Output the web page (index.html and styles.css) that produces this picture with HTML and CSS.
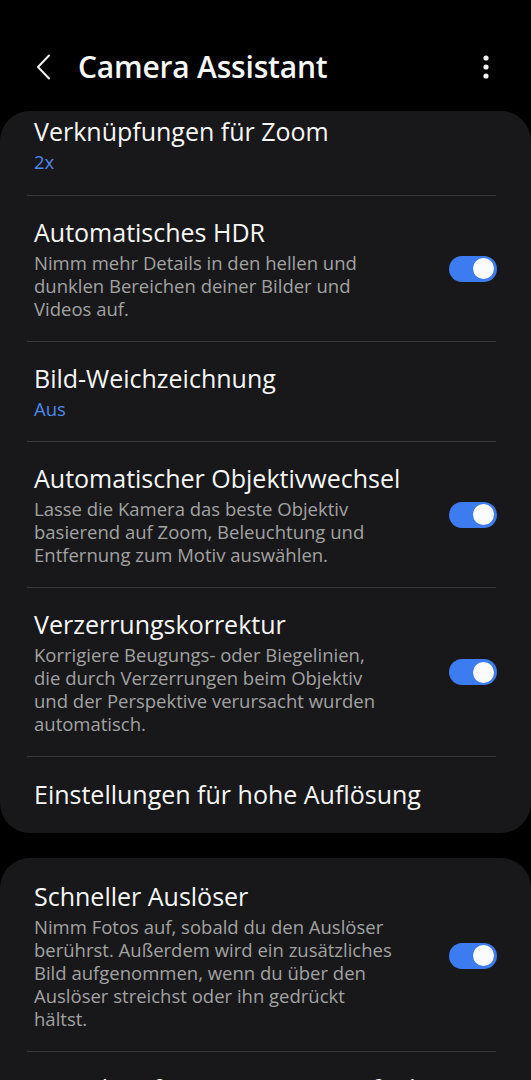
FILE: index.html
```html
<!DOCTYPE html>
<html lang="de">
<head>
  <meta charset="UTF-8" />
  <meta name="viewport" content="width=device-width, initial-scale=1.0"/>
  <title>Camera Assistant</title>
  <link rel="stylesheet" href="styles.css">
</head>
<body>
  <div class="header">
    <span class="back">
      <svg width="16" height="26" viewBox="0 0 16 26"><path d="M13 1.5 L2 13 L13 24.5" fill="none" stroke="#f2f2f2" stroke-width="2" stroke-linecap="round" stroke-linejoin="round"/></svg>
    </span>
    <h1>Camera Assistant</h1>
    <span class="more">
      <svg width="8" height="26" viewBox="0 0 8 26"><circle cx="4" cy="4" r="2.6" fill="#f2f2f2"/><circle cx="4" cy="13" r="2.6" fill="#f2f2f2"/><circle cx="4" cy="22" r="2.6" fill="#f2f2f2"/></svg>
    </span>
  </div>

  <div class="card card-first">
    <div class="row first">
      <div class="text">
        <div class="title">Verknüpfungen für Zoom</div>
        <div class="value">2x</div>
      </div>
    </div>
    <hr class="divider">
    <div class="row">
      <div class="text">
        <div class="title">Automatisches HDR</div>
        <div class="desc">Nimm mehr Details in den hellen und<br>dunklen Bereichen deiner Bilder und<br>Videos auf.</div>
      </div>
      <span class="switch on"><span class="knob"></span></span>
    </div>
    <hr class="divider">
    <div class="row">
      <div class="text">
        <div class="title">Bild-Weichzeichnung</div>
        <div class="value">Aus</div>
      </div>
    </div>
    <hr class="divider">
    <div class="row">
      <div class="text">
        <div class="title">Automatischer Objektivwechsel</div>
        <div class="desc">Lasse die Kamera das beste Objektiv<br>basierend auf Zoom, Beleuchtung und<br>Entfernung zum Motiv auswählen.</div>
      </div>
      <span class="switch on"><span class="knob"></span></span>
    </div>
    <hr class="divider">
    <div class="row">
      <div class="text">
        <div class="title">Verzerrungskorrektur</div>
        <div class="desc">Korrigiere Beugungs- oder Biegelinien,<br>die durch Verzerrungen beim Objektiv<br>und der Perspektive verursacht wurden<br>automatisch.</div>
      </div>
      <span class="switch on"><span class="knob"></span></span>
    </div>
    <hr class="divider">
    <div class="row single">
      <div class="text">
        <div class="title">Einstellungen für hohe Auflösung</div>
      </div>
    </div>
  </div>

  <div class="card">
    <div class="row top">
      <div class="text">
        <div class="title">Schneller Auslöser</div>
        <div class="desc">Nimm Fotos auf, sobald du den Auslöser<br>berührst. Außerdem wird ein zusätzliches<br>Bild aufgenommen, wenn du über den<br>Auslöser streichst oder ihn gedrückt<br>hältst.</div>
      </div>
      <span class="switch on"><span class="knob"></span></span>
    </div>
    <hr class="divider">
    <div class="row">
      <div class="text">
        <div class="title">Vorgaben für Timer-Serienaufnahmen</div>
      </div>
    </div>
  </div>
</body>
</html>
```

FILE: styles.css
```css
html, body {
  margin: 0;
  padding: 0;
  background: #000;
  height: 1080px;
  overflow: hidden;
}
body {
  font-family: 'Open Sans', 'Noto Sans', sans-serif;
  color: #f7f7f7;
}
.header {
  height: 111px;
  box-sizing: border-box;
  padding: 22px 0 0 36px;
  display: flex;
  align-items: center;
}
.back {
  display: flex;
  width: 16px;
}
h1 {
  margin: 0 0 0 26px;
  font-size: 30px;
  font-weight: 600;
  letter-spacing: -0.2px;
  color: #f7f7f7;
  flex: 1;
}
.more {
  display: flex;
  margin-right: 41px;
}
.card {
  background: #18181a;
  border-radius: 30px;
  margin-bottom: 25px;
}
.card-first {
  padding-top: 5px;
}
.row {
  display: flex;
  align-items: center;
  padding: 21px 34px 21px 34px;
}
.row.first {
  padding-top: 0;
  padding-bottom: 22px;
}
.row.top {
  padding-top: 23px;
}
.row.single {
  padding-top: 22px;
  padding-bottom: 24px;
}
.text {
  flex: 1;
}
.title {
  font-size: 25px;
  line-height: 30px;
  font-weight: 500;
  white-space: nowrap;
}
.desc {
  margin-top: 4px;
  font-size: 18.5px;
  line-height: 23px;
  color: #a2a2a2;
  white-space: nowrap;
}
.value {
  margin-top: 4px;
  font-size: 18.5px;
  line-height: 23px;
  color: #4f87ea;
}
.divider {
  border: none;
  border-top: 1px solid #39393b;
  margin: 0 35px 0 27px;
}
.switch {
  width: 48px;
  height: 26px;
  border-radius: 13px;
  background: #3d7bf0;
  display: flex;
  align-items: center;
  justify-content: flex-end;
  padding: 0 3px;
  box-sizing: border-box;
  flex-shrink: 0;
}
.knob {
  width: 21px;
  height: 21px;
  border-radius: 50%;
  background: #fbfbfb;
}
```
